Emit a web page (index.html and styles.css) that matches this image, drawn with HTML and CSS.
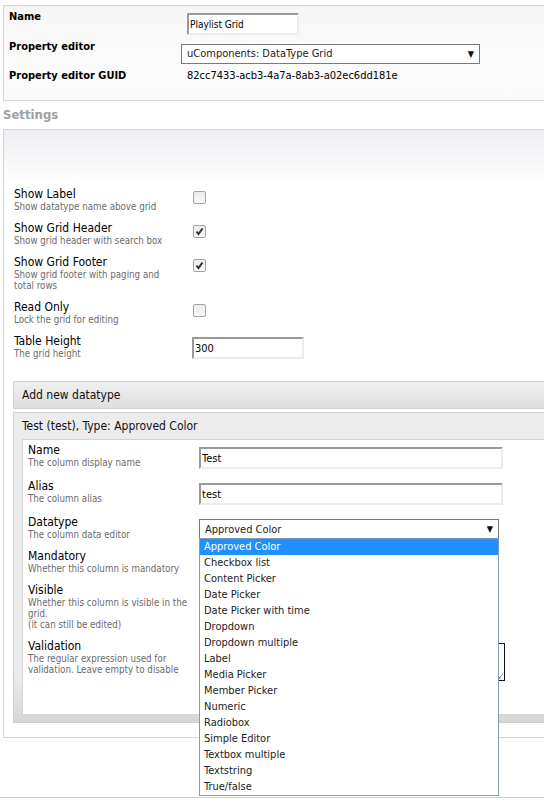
FILE: index.html
```html
<!DOCTYPE html>
<html>
<head>
<meta charset="utf-8">
<title>Playlist Grid</title>
<link rel="stylesheet" href="styles.css">
</head>
<body>
<div class="page">
  <div class="panel props">
    <div class="prop-row r1">
      <div class="prop-label">Name</div>
      <div class="prop-val"><input class="textbox name-box" type="text" value="Playlist Grid"></div>
    </div>
    <div class="prop-row r2">
      <div class="prop-label">Property editor</div>
      <div class="prop-val"><div class="select editor-select"><span>uComponents: DataType Grid</span><span class="arrow">▼</span></div></div>
    </div>
    <div class="prop-row r3">
      <div class="prop-label">Property editor GUID</div>
      <div class="prop-val guid">82cc7433-acb3-4a7a-8ab3-a02ec6dd181e</div>
    </div>
  </div>

  <h2 class="section-title">Settings</h2>

  <div class="panel settings">
    <div class="srow">
      <div class="slabel"><div class="stitle">Show Label</div><div class="sdesc">Show datatype name above grid</div></div>
      <div class="sctrl"><span class="cb"></span></div>
    </div>
    <div class="srow">
      <div class="slabel"><div class="stitle">Show Grid Header</div><div class="sdesc">Show grid header with search box</div></div>
      <div class="sctrl"><span class="cb checked"><svg viewBox="0 0 13 13" width="13" height="13"><path d="M3.5 6.5 L5.5 9 L9.5 3.5" fill="none" stroke="#333" stroke-width="2"/></svg></span></div>
    </div>
    <div class="srow">
      <div class="slabel"><div class="stitle">Show Grid Footer</div><div class="sdesc">Show grid footer with paging and total rows</div></div>
      <div class="sctrl"><span class="cb checked"><svg viewBox="0 0 13 13" width="13" height="13"><path d="M3.5 6.5 L5.5 9 L9.5 3.5" fill="none" stroke="#333" stroke-width="2"/></svg></span></div>
    </div>
    <div class="srow">
      <div class="slabel"><div class="stitle">Read Only</div><div class="sdesc">Lock the grid for editing</div></div>
      <div class="sctrl"><span class="cb"></span></div>
    </div>
    <div class="srow">
      <div class="slabel"><div class="stitle">Table Height</div><div class="sdesc">The grid height</div></div>
      <div class="sctrl"><input class="textbox height-box" type="text" value="300"></div>
    </div>

    <div class="grid-editor">
      <div class="bar">Add new datatype</div>
      <div class="colbox">
        <div class="coltitle">Test (test), Type: Approved Color</div>
        <div class="colinner">
          <div class="crow">
            <div class="clabel"><div class="stitle">Name</div><div class="sdesc">The column display name</div></div>
            <div class="cctrl"><input class="textbox wide-box" type="text" value="Test"></div>
          </div>
          <div class="crow">
            <div class="clabel"><div class="stitle">Alias</div><div class="sdesc">The column alias</div></div>
            <div class="cctrl"><input class="textbox wide-box" type="text" value="test"></div>
          </div>
          <div class="crow">
            <div class="clabel"><div class="stitle">Datatype</div><div class="sdesc">The column data editor</div></div>
            <div class="cctrl">
              <div class="dd-wrap">
                <div class="select type-select"><span>Approved Color</span><span class="arrow">▼</span></div>
                <ul class="dd-list">
                  <li class="sel">Approved Color</li>
                  <li>Checkbox list</li>
                  <li>Content Picker</li>
                  <li>Date Picker</li>
                  <li>Date Picker with time</li>
                  <li>Dropdown</li>
                  <li>Dropdown multiple</li>
                  <li>Label</li>
                  <li>Media Picker</li>
                  <li>Member Picker</li>
                  <li>Numeric</li>
                  <li>Radiobox</li>
                  <li>Simple Editor</li>
                  <li>Textbox multiple</li>
                  <li>Textstring</li>
                  <li>True/false</li>
                </ul>
              </div>
            </div>
          </div>
          <div class="crow">
            <div class="clabel"><div class="stitle">Mandatory</div><div class="sdesc">Whether this column is mandatory</div></div>
            <div class="cctrl"></div>
          </div>
          <div class="crow">
            <div class="clabel"><div class="stitle">Visible</div><div class="sdesc">Whether this column is visible in the grid.<br>(it can still be edited)</div></div>
            <div class="cctrl"></div>
          </div>
          <div class="crow">
            <div class="clabel"><div class="stitle">Validation</div><div class="sdesc">The regular expression used for validation. Leave empty to disable</div></div>
            <div class="cctrl"><div class="textarea"><span class="grip"></span></div></div>
          </div>
        </div>
      </div>
    </div>
  </div>
  <div class="footer-line"></div>
</div>
</body>
</html>
```

FILE: styles.css
```css
html, body {
  margin: 0;
  padding: 0;
  overflow: hidden;
  background: #fff;
}
body {
  font-family: "DejaVu Sans Condensed", "DejaVu Sans", sans-serif;
  font-size: 11px;
  color: #000;
}
.page {
  padding-top: 5px;
}
.panel {
  margin-left: 3px;
  border: 1px solid #d6d6d6;
  border-right: none;
  box-sizing: border-box;
}
.props {
  padding: 4px 0 17px 5px;
  background: linear-gradient(#f6f6f6, #fbfbfb 60%, #f9f9f9);
}
.prop-row {
  display: flex;
  align-items: flex-start;
}
.prop-row.r1 { height: 30px; }
.prop-row.r2 { height: 29px; }
.prop-label {
  width: 178px;
  flex: none;
  font-weight: bold;
  line-height: 14px;
  font-size: 11px;
}
.prop-val { line-height: 14px; }
.guid { font-size: 11px; }
.textbox {
  display: block;
  box-sizing: border-box;
  margin: 0;
  padding: 0 0 0 1px;
  font-family: inherit;
  font-size: 11px;
  color: #000;
  background: #fff;
  border-style: solid;
  border-width: 2px;
  border-color: #9a9a9a #ececec #ececec #9a9a9a;
  outline: none;
}
.name-box { width: 112px; height: 22px; margin-top: 3px; font-size: 10px; }
.select {
  box-sizing: border-box;
  display: flex;
  align-items: center;
  justify-content: space-between;
  border: 1px solid #7a7a7a;
  background: #fff;
  height: 20px;
  padding: 0 5px 0 5px;
  font-size: 11px;
  color: #222;
}
.select .arrow {
  font-size: 9px;
  color: #111;
}
.editor-select { width: 299px; margin-left: -6px; margin-top: 4px; }

.section-title {
  margin: 6px 0 6px 3px;
  font-size: 13px;
  line-height: 16px;
  font-weight: bold;
  color: #a0a0a0;
}

.settings {
  padding: 57px 0 14px 10px;
  background: linear-gradient(#eeeef2 0px, #ffffff 55px);
}
.srow {
  display: flex;
  align-items: flex-start;
  margin-bottom: 9px;
}
.slabel { width: 179px; flex: none; }
.stitle {
  font-size: 12px;
  line-height: 14px;
  color: #000;
}
.sdesc {
  font-size: 9.7px;
  line-height: 11px;
  color: #6b6b6b;
  width: 160px;
}
.cb {
  display: block;
  width: 13px;
  height: 13px;
  box-sizing: border-box;
  margin-top: 4px;
  border: 1px solid #a4a4a4;
  border-radius: 2px;
  background: linear-gradient(#ececec, #f8f8f8);
  position: relative;
}
.cb svg { position: absolute; left: -1px; top: -1px; }
.height-box { width: 112px; height: 22px; margin-top: 3px; margin-left: -1px; }

.grid-editor {
  margin-left: -1px;
  margin-top: 22px;
}
.bar {
  height: 28px;
  box-sizing: border-box;
  border: 1px solid #cfcfcf;
  border-right: none;
  background: linear-gradient(#f0f0f0, #dedede);
  padding-left: 8px;
  line-height: 26px;
  font-size: 12px;
  color: #111;
}
.colbox {
  margin-top: 3px;
  border: 1px solid #cfcfcf;
  border-right: none;
  background: linear-gradient(#ececec 0, #ececec 85%, #d6d6d6 100%);
  padding: 6px 0 7px 8px;
}
.coltitle {
  font-size: 12px;
  line-height: 14px;
  color: #111;
  margin-bottom: 6px;
}
.colinner {
  background: #fff;
  border: 1px solid #d4d4d4;
  border-right: none;
  height: 276px;
  box-sizing: border-box;
  padding: 3px 0 0 5px;
}
.crow {
  display: flex;
  align-items: flex-start;
  margin-bottom: 9px;
}
.crow:nth-child(1), .crow:nth-child(2) { margin-bottom: 10px; }
.clabel { width: 171px; flex: none; }
.clabel .sdesc { width: 162px; }
.wide-box { width: 304px; height: 22px; margin-top: 4px; font-size: 11px; }
.dd-wrap { position: relative; margin-top: 4px; width: 300px; }
.type-select { width: 300px; }
.dd-list {
  position: absolute;
  left: 0;
  top: 19px;
  width: 300px;
  box-sizing: border-box;
  margin: 0;
  padding: 0;
  list-style: none;
  background: #fff;
  border: 1px solid #7f9db9;
  z-index: 5;
}
.dd-list li {
  height: 16px;
  line-height: 16px;
  padding-left: 4px;
  font-size: 11px;
  color: #222;
}
.dd-list li.sel {
  background: #1e90ff;
  color: #fff;
}
.textarea {
  margin-top: 4px;
  width: 306px;
  height: 38px;
  box-sizing: border-box;
  border: 1px solid #111;
  position: relative;
}
.grip {
  position: absolute;
  right: 1px;
  bottom: 1px;
  width: 5px;
  height: 5px;
  background: linear-gradient(135deg, transparent 45%, #999 45%, #999 60%, transparent 60%);
}
.footer-line {
  margin-top: 59px;
  height: 1px;
  background: #cfcfcf;
}
```
